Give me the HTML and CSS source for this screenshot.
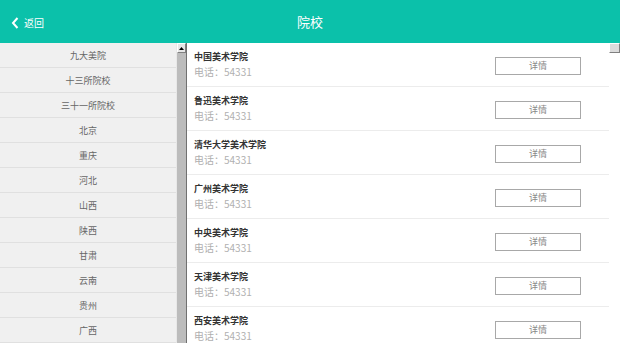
FILE: index.html
```html
<!DOCTYPE html>
<html>
<head>
    <meta charset="utf-8">
    <title>院校</title>
    <link rel="stylesheet" href="styles.css">
</head>
<body>
    <div class="header">
        <div class="back">
            <svg width="8" height="12" viewBox="0 0 8 12"><path d="M6.5 1 L2 6 L6.5 11" fill="none" stroke="#fff" stroke-width="2"/></svg>
            <span>返回</span>
        </div>
        <div class="title">院校</div>
    </div>

    <div class="wrap">
        <div class="side">
            <div class="side-item">九大美院</div>
            <div class="side-item">十三所院校</div>
            <div class="side-item">三十一所院校</div>
            <div class="side-item">北京</div>
            <div class="side-item">重庆</div>
            <div class="side-item">河北</div>
            <div class="side-item">山西</div>
            <div class="side-item">陕西</div>
            <div class="side-item">甘肃</div>
            <div class="side-item">云南</div>
            <div class="side-item">贵州</div>
            <div class="side-item">广西</div>
        </div>
        <div class="bar bar-left">
            <div class="arrow"><svg width="5" height="3" viewBox="0 0 5 3"><path d="M0 3 L2.5 0 L5 3 Z" fill="#000"/></svg></div>
        </div>

        <div class="list">
            <div class="school">
                <div class="info">
                    <div class="name">中国美术学院</div>
                    <div class="tel">电话：54331</div>
                </div>
                <button class="btn">详情</button>
            </div>
            <div class="school">
                <div class="info">
                    <div class="name">鲁迅美术学院</div>
                    <div class="tel">电话：54331</div>
                </div>
                <button class="btn">详情</button>
            </div>
            <div class="school">
                <div class="info">
                    <div class="name">清华大学美术学院</div>
                    <div class="tel">电话：54331</div>
                </div>
                <button class="btn">详情</button>
            </div>
            <div class="school">
                <div class="info">
                    <div class="name">广州美术学院</div>
                    <div class="tel">电话：54331</div>
                </div>
                <button class="btn">详情</button>
            </div>
            <div class="school">
                <div class="info">
                    <div class="name">中央美术学院</div>
                    <div class="tel">电话：54331</div>
                </div>
                <button class="btn">详情</button>
            </div>
            <div class="school">
                <div class="info">
                    <div class="name">天津美术学院</div>
                    <div class="tel">电话：54331</div>
                </div>
                <button class="btn">详情</button>
            </div>
            <div class="school">
                <div class="info">
                    <div class="name">西安美术学院</div>
                    <div class="tel">电话：54331</div>
                </div>
                <button class="btn">详情</button>
            </div>
        </div>
        <div class="bar bar-right">
            <div class="arrow light"></div>
        </div>
    </div>
</body>
</html>
```

FILE: styles.css
```css
body {
    margin: 0;
    font-family: "Noto Sans CJK SC", "Noto Sans", sans-serif;
    background: #fff;
    overflow: hidden;
}
.header {
    height: 43px;
    background: #0bc1aa;
    display: flex;
    align-items: center;
    justify-content: center;
    position: relative;
    color: #fff;
}
.back {
    position: absolute;
    left: 11px;
    top: 15px;
    display: flex;
    align-items: center;
    gap: 5px;
    font-size: 10px;
}
.title {
    font-size: 13px;
}
.wrap {
    display: flex;
    height: 300px;
    overflow: hidden;
}
.side {
    width: 176px;
    background: #f0f0f0;
}
.side-item {
    height: 24px;
    border-bottom: 1px solid #e0e0e0;
    display: flex;
    align-items: center;
    justify-content: center;
    font-size: 9px;
    color: #666;
}
.bar {
    width: 11px;
    box-sizing: border-box;
}
.bar-left {
    background: #bcbcbc;
    border-left: 1px solid #e8e8e8;
    border-right: 1px solid #707070;
}
.bar-right {
    background: #fff;
}
.arrow {
    height: 10px;
    background: #e6e6e6;
    border: 1px solid #fff;
    border-right-color: #808080;
    border-bottom-color: #808080;
    box-sizing: border-box;
    display: flex;
    align-items: center;
    justify-content: center;
}
.arrow.light {
    background: #dcdcdc;
}
.list {
    flex: 1;
}
.school {
    height: 43px;
    border-bottom: 1px solid #ececec;
    display: flex;
    align-items: center;
    padding: 0 28px 0 7px;
}
.info {
    flex: 1;
    padding-bottom: 1px;
}
.name {
    font-size: 9px;
    font-weight: bold;
    color: #333;
    line-height: 14px;
}
.tel {
    font-size: 10px;
    color: #b0b0b0;
    line-height: 15px;
}
.btn {
    width: 86px;
    height: 18px;
    margin-top: 2px;
    background: #fff;
    border: 1px solid #a8a8a8;
    color: #888;
    font-family: inherit;
    font-size: 9px;
    padding: 0;
}
```
